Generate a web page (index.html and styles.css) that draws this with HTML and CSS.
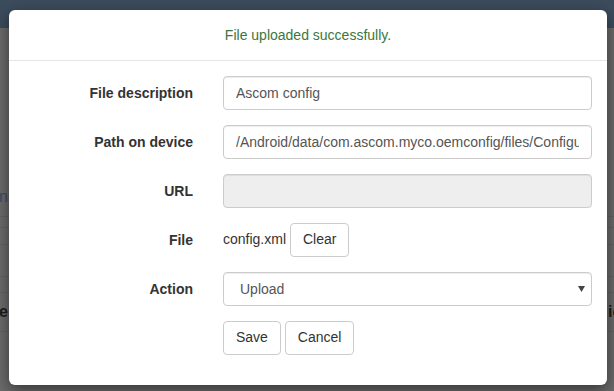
FILE: index.html
```html
<!DOCTYPE html>
<html lang="en">
<head>
    <meta charset="UTF-8">
    <meta name="viewport" content="width=device-width, initial-scale=1.0">
    <title>Upload file</title>
<link rel="stylesheet" href="styles.css">
</head>
<body>
    <div class="page">
        <div class="navbar"></div>
        <div class="page-body">
            <div class="bg-row link-row">
                <span class="edge-left link">Assign</span>
            </div>
            <div class="bg-row tab-row"></div>
            <div class="bg-row row-a"></div>
            <div class="bg-row row-b"></div>
            <div class="bg-row row-c"></div>
            <div class="bg-row head-row">
                <span class="edge-left">Name</span>
                <span class="edge-right">ic</span>
            </div>
        </div>
    </div>

    <div class="modal">
        <div class="modal-header">File uploaded successfully.</div>
        <div class="modal-body">
            <form class="form-horizontal">
                <div class="form-group">
                    <label class="control-label">File description</label>
                    <div class="control">
                        <input class="form-control" type="text" value="Ascom config">
                    </div>
                </div>
                <div class="form-group">
                    <label class="control-label">Path on device</label>
                    <div class="control">
                        <input class="form-control" type="text" value="/Android/data/com.ascom.myco.oemconfig/files/Configuration.xml">
                    </div>
                </div>
                <div class="form-group">
                    <label class="control-label">URL</label>
                    <div class="control">
                        <input class="form-control" type="text" disabled>
                    </div>
                </div>
                <div class="form-group">
                    <label class="control-label">File</label>
                    <div class="control">
                        <span class="file-name">config.xml</span>
                        <button class="btn" type="button">Clear</button>
                    </div>
                </div>
                <div class="form-group">
                    <label class="control-label">Action</label>
                    <div class="control">
                        <select class="form-control select">
                            <option>Upload</option>
                        </select>
                    </div>
                </div>
                <div class="form-group">
                    <div class="control-label"></div>
                    <div class="control">
                        <button class="btn" type="button">Save</button>
                        <button class="btn" type="button">Cancel</button>
                    </div>
                </div>
            </form>
        </div>
    </div>
</body>
</html>
```

FILE: styles.css
```css
* {
    box-sizing: border-box;
}

body {
    margin: 0;
    font-family: "Liberation Sans", Arial, sans-serif;
    font-size: 14px;
    line-height: 1.42857;
    color: #333;
    background: #6b6b6b;
    height: 391px;
    overflow: hidden;
}

/* dimmed page behind the modal */
.navbar {
    height: 28px;
    background: #3c4c5d;
}

.page-body {
    display: flex;
    flex-direction: column;
}

.bg-row {
    display: flex;
    justify-content: space-between;
    align-items: center;
    border-bottom: 1px solid #626262;
}

.link-row {
    height: 189px;
    padding-top: 150px;
}

.tab-row {
    height: 11px;
}

.row-a {
    height: 17px;
}

.row-b {
    height: 32px;
}

.row-c {
    height: 16px;
}

.head-row {
    height: 39px;
    font-weight: bold;
    color: #1c1c1c;
    font-size: 16px;
}

.edge-left {
    display: flex;
    justify-content: flex-end;
    width: 8px;
    white-space: nowrap;
}

.edge-right {
    width: 7px;
    padding-left: 1px;
    white-space: nowrap;
    overflow: hidden;
}

.link {
    color: #3d4b66;
    font-size: 16px;
}

/* modal */
.modal {
    position: absolute;
    top: 10px;
    left: 9px;
    width: 598px;
    background: #fff;
    border-radius: 6px;
    box-shadow: 0 5px 15px rgba(0, 0, 0, 0.5);
}

.modal-header {
    padding: 16px 15px 14px;
    border-bottom: 1px solid #e5e5e5;
    text-align: center;
    color: #3c763d;
}

.modal-body {
    padding: 15px;
}

.form-group {
    display: flex;
    margin-bottom: 15px;
}

.control-label {
    width: 184px;
    flex-shrink: 0;
    padding-top: 8px;
    padding-right: 15px;
    text-align: right;
    font-weight: bold;
}

.control {
    flex: 1;
    padding-left: 15px;
}

.form-control {
    display: block;
    width: 100%;
    height: 34px;
    padding: 6px 12px;
    font-family: inherit;
    font-size: 14px;
    color: #555;
    background: #fff;
    border: 1px solid #ccc;
    border-radius: 4px;
    box-shadow: inset 0 1px 1px rgba(0, 0, 0, 0.075);
}

.form-control:disabled {
    background: #eee;
}

.select {
    appearance: none;
    -webkit-appearance: none;
    padding-left: 16px;
    background-image: url("data:image/svg+xml,%3Csvg xmlns='http://www.w3.org/2000/svg' width='7' height='6'%3E%3Cpath d='M0 0h7L3.5 6z' fill='%23444'/%3E%3C/svg%3E");
    background-repeat: no-repeat;
    background-position: right 6px center;
}

.file-name {
    color: #333;
}

.btn {
    display: inline-block;
    height: 34px;
    padding: 6px 12px;
    font-family: inherit;
    font-size: 14px;
    line-height: 1.42857;
    color: #333;
    background: #fff;
    border: 1px solid #ccc;
    border-radius: 4px;
}
```
